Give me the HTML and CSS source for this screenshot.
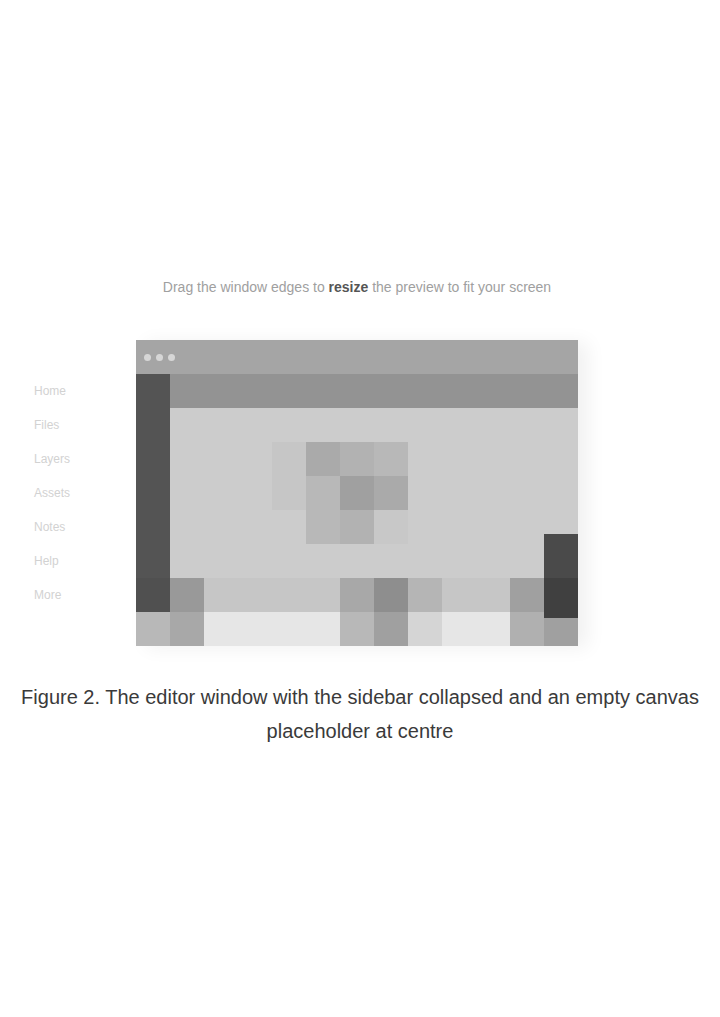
FILE: index.html
```html
<!DOCTYPE html>
<html lang="en">
<head>
<meta charset="utf-8">
<title>Preview</title>
<link rel="stylesheet" href="styles.css">
</head>
<body>
<main class="page">
  <div class="stage-row">
    <p class="heading">Drag the window edges to <b>resize</b> the preview to fit your screen</p>
    <ul class="aside">
      <li>Home</li>
      <li>Files</li>
      <li>Layers</li>
      <li>Assets</li>
      <li>Notes</li>
      <li>Help</li>
      <li>More</li>
    </ul>
    <div class="window">
      <div class="titlebar">
        <span class="dot"></span><span class="dot"></span><span class="dot"></span>
      </div>
      <div class="sidebar"></div>
      <div class="toolbar"></div>
      <div class="canvas">
        <div class="canvas-center">
          <svg class="image-icon" width="136" height="102" viewBox="0 0 136 102" aria-hidden="true">
            <rect x="0" y="0" width="34" height="68" fill="#c6c6c6"/>
            <rect x="34" y="0" width="34" height="34" fill="#aaaaaa"/>
            <rect x="68" y="0" width="34" height="34" fill="#b2b2b2"/>
            <rect x="102" y="0" width="34" height="34" fill="#b8b8b8"/>
            <rect x="34" y="34" width="34" height="34" fill="#b8b8b8"/>
            <rect x="68" y="34" width="34" height="34" fill="#a0a0a0"/>
            <rect x="102" y="34" width="34" height="34" fill="#aaaaaa"/>
            <rect x="34" y="68" width="34" height="34" fill="#b8b8b8"/>
            <rect x="68" y="68" width="34" height="34" fill="#b2b2b2"/>
            <rect x="102" y="68" width="34" height="34" fill="#c8c8c8"/>
          </svg>
        </div>
        <div class="rail"><div class="rail-handle"></div></div>
      </div>
      <div class="footer">
        <div class="f-cap"></div>
        <div class="f-btn"></div>
        <div class="f-space"></div>
        <div class="f-btn light"></div>
        <div class="f-btn dark"></div>
        <div class="f-pill"></div>
        <div class="f-gap"></div>
        <div class="f-btn mid"></div>
        <div class="f-btn black"></div>
      </div>
    </div>
  </div>
  <p class="caption">Figure 2. The editor window with the sidebar collapsed and an empty canvas placeholder at centre</p>
</main>
</body>
</html>
```
FILE: styles.css
```css
* { box-sizing: border-box; }
html, body { margin: 0; padding: 0; background: #ffffff; }
body { font-family: "Liberation Sans", Arial, sans-serif; color: #333; }

.page {
  padding-top: 278px;
  display: flex;
  flex-direction: column;
}

.stage-row {
  display: grid;
  grid-template-columns: 34px 66px 36px 442px;
  grid-template-rows: auto auto;
  row-gap: 44px;
}

.heading {
  grid-column: 4;
  grid-row: 1;
  margin: 0;
  text-align: center;
  font-size: 14px;
  line-height: 18px;
  color: #a0a0a0;
  white-space: nowrap;
}
.heading b { color: #555; }

.aside {
  grid-column: 2;
  grid-row: 2;
  list-style: none;
  margin: 34px 0 0;
  padding: 0;
}
.aside li {
  height: 34px;
  line-height: 34px;
  font-size: 12px;
  color: #d2d2d2;
}

.window {
  grid-column: 4;
  grid-row: 2;
  width: 442px;
  height: 306px;
  display: grid;
  grid-template-columns: 34px 1fr;
  grid-template-rows: 34px 34px 170px 68px;
  box-shadow: 10px 2px 18px rgba(0,0,0,0.06);
}

.titlebar {
  grid-column: 1 / -1;
  background: #a5a5a5;
  display: flex;
  align-items: center;
  gap: 5px;
  padding-left: 8px;
}
.dot { width: 7px; height: 7px; border-radius: 50%; background: #d6d6d6; }

.sidebar {
  grid-column: 1;
  grid-row: 2 / 4;
  background: #545454;
}

.toolbar {
  grid-column: 2;
  grid-row: 2;
  background: #939393;
}

.canvas {
  grid-column: 2;
  grid-row: 3;
  background: #cccccc;
  display: flex;
}
.canvas-center {
  flex: 1;
  display: flex;
  align-items: center;
  justify-content: center;
  padding-right: 34px;
}
.rail {
  width: 34px;
  display: flex;
  flex-direction: column;
  justify-content: flex-end;
}
.rail-handle {
  height: 44px;
  background: #4a4a4a;
}

.footer {
  grid-column: 1 / -1;
  grid-row: 4;
  background: linear-gradient(#c6c6c6 0 34px, #e6e6e6 34px);
  display: flex;
}
.f-cap { width: 34px; background: linear-gradient(#505050 0 34px, #b8b8b8 34px); }
.f-btn { width: 34px; background: linear-gradient(#999 0 34px, #a8a8a8 34px); }
.f-btn.light { background: linear-gradient(#a8a8a8 0 34px, #b8b8b8 34px); }
.f-btn.dark { background: linear-gradient(#8e8e8e 0 34px, #a0a0a0 34px); }
.f-btn.mid { background: linear-gradient(#a0a0a0 0 34px, #b0b0b0 34px); }
.f-btn.black { background: linear-gradient(#404040 0 40px, #a0a0a0 40px); }
.f-space { width: 136px; }
.f-pill { width: 34px; background: linear-gradient(#b5b5b5 0 34px, #d5d5d5 34px); }
.f-gap { width: 68px; }

.caption {
  margin: 34px 0 0;
  padding: 0;
  text-align: center;
  font-size: 20px;
  line-height: 34px;
  color: #3a3a3a;
}
```
